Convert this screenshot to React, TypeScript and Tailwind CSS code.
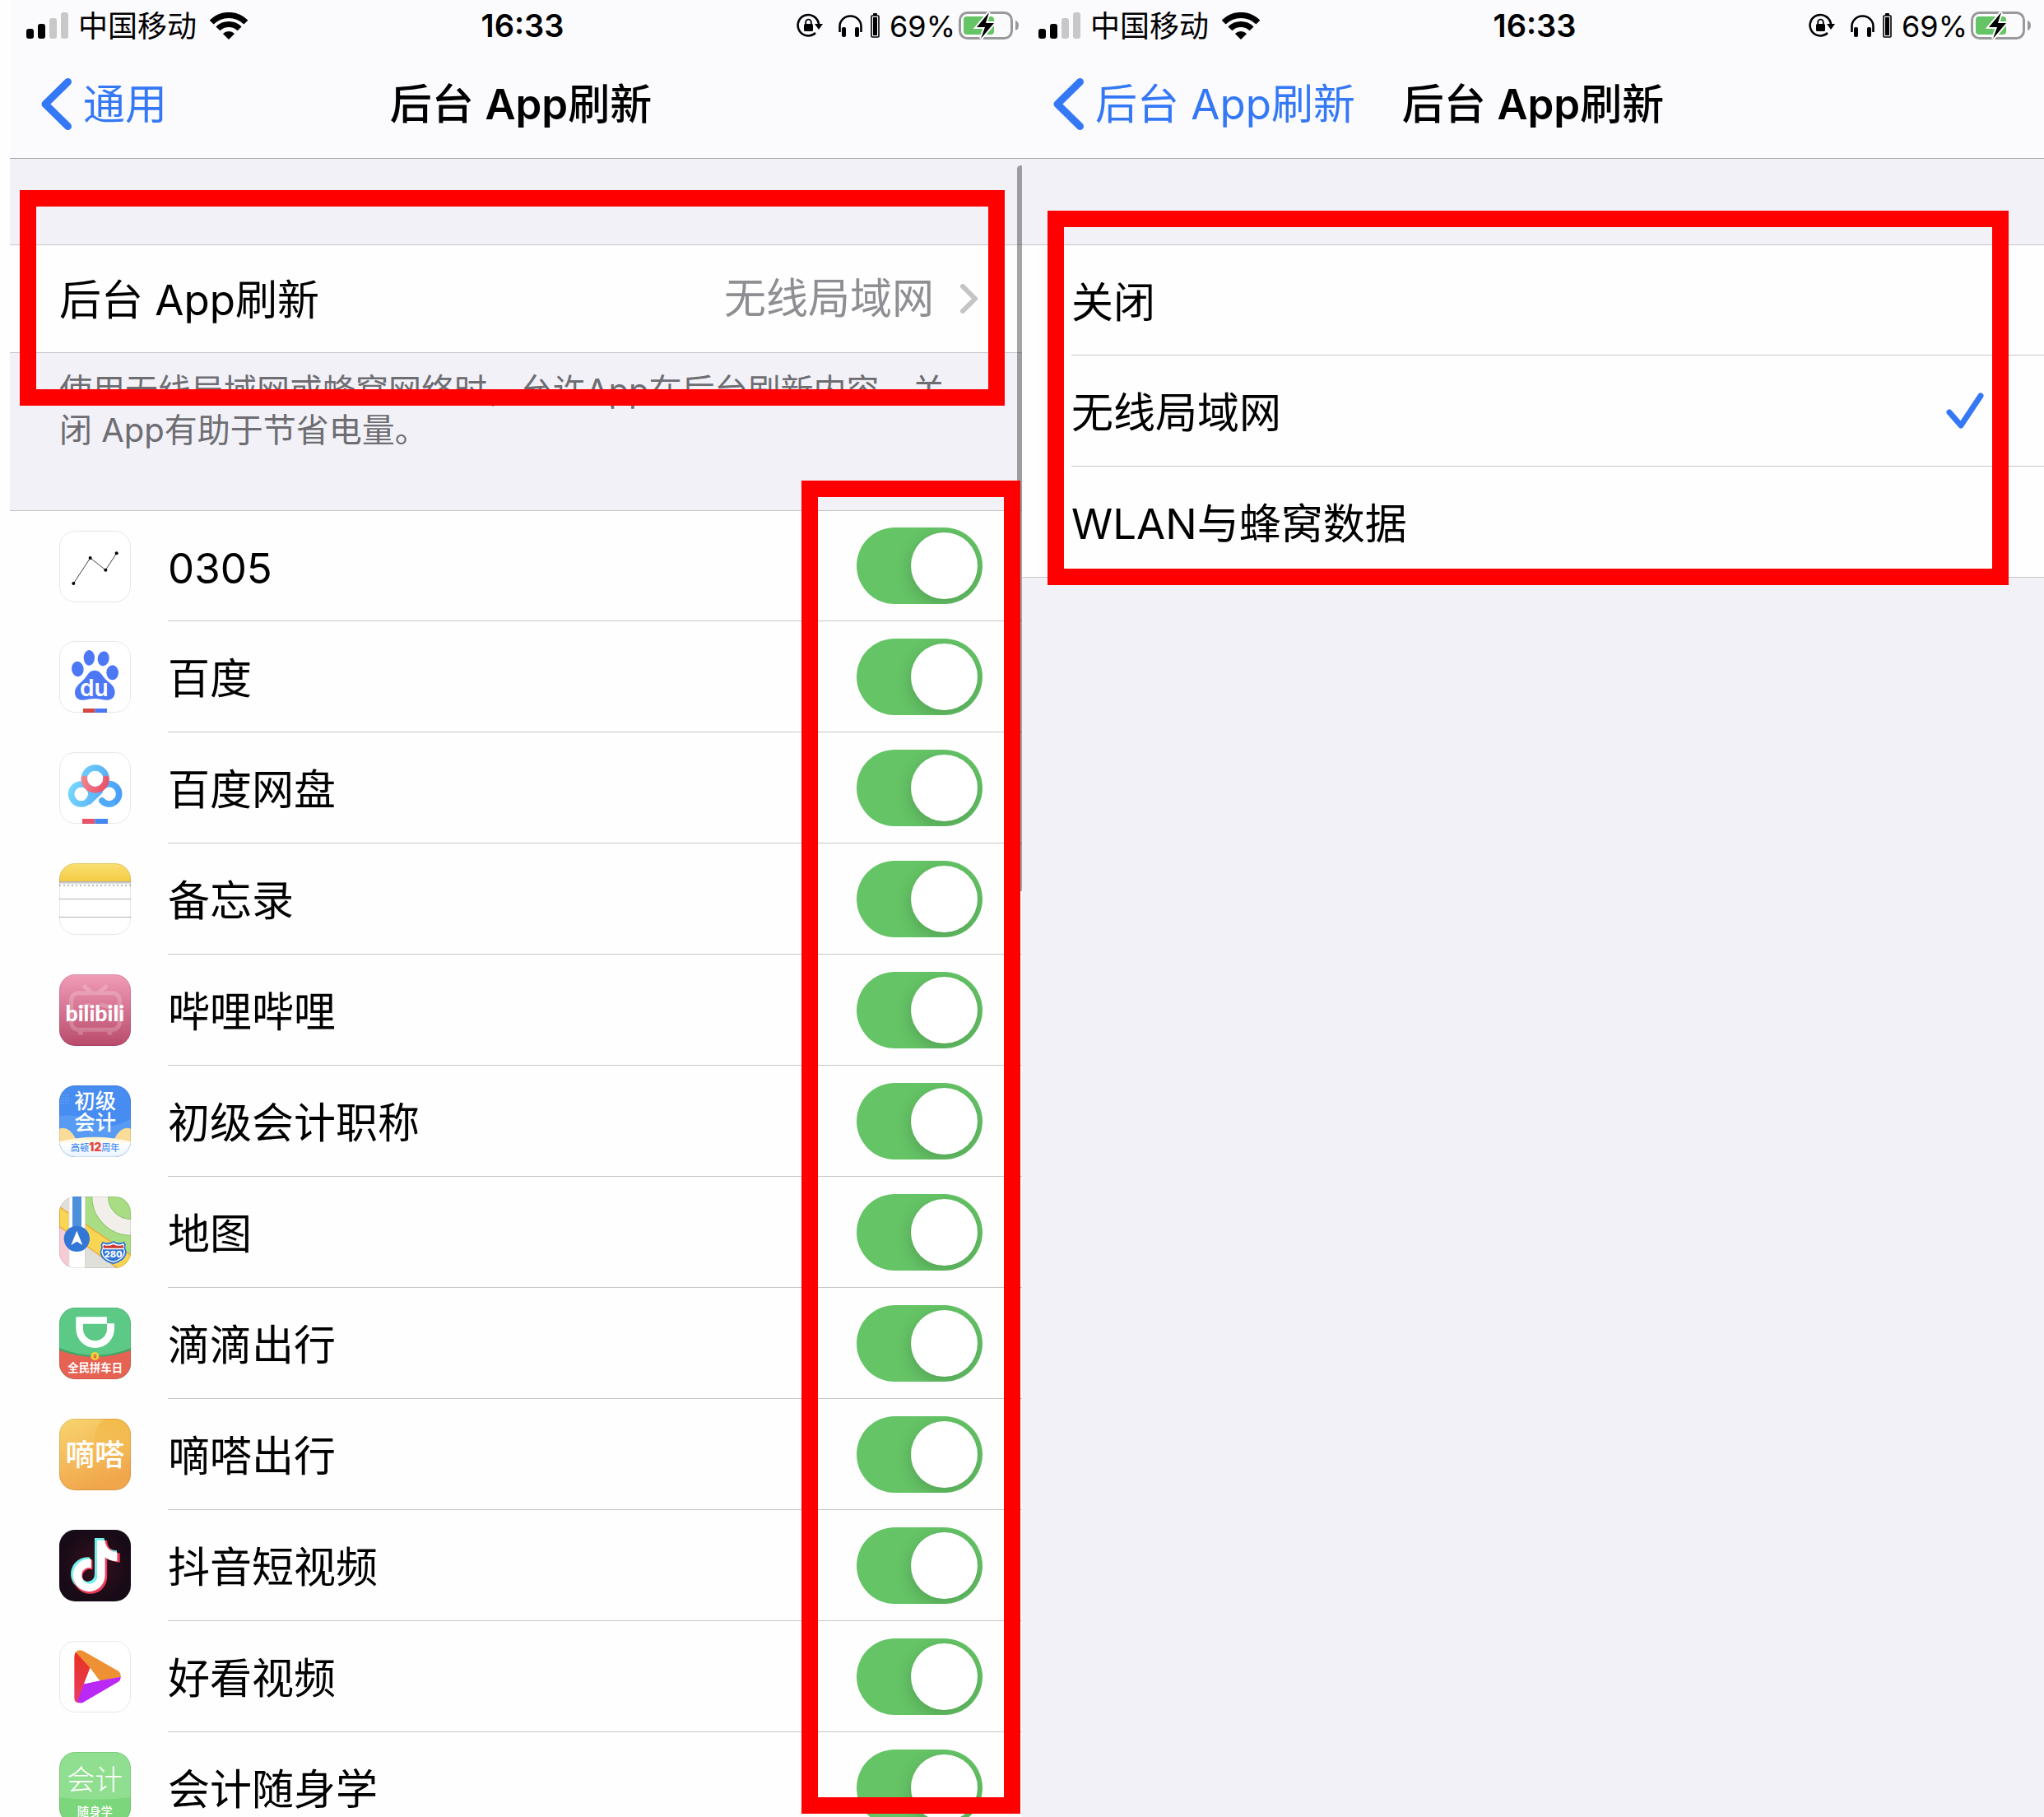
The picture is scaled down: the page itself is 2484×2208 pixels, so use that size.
import { useId, useState } from 'react'
import type { ReactNode } from 'react'

const CJK = '"Noto Sans CJK SC", sans-serif'
const TIKTOK_NOTE =
  'M448,209.91a210.06,210.06,0,0,1-122.77-39.25V349.38A162.55,162.55,0,1,1,185,188.31V278.2a74.62,74.62,0,1,0,52.23,71.18V0l88,0a121.18,121.18,0,0,0,1.86,22.17h0A122.18,122.18,0,0,0,381,102.39a121.43,121.43,0,0,0,67,20.14Z'

/* ---------- app icons, all drawn on a 261 unit square ---------- */

function IconFrame({ children, outline = '#00000018' }: { children: ReactNode; outline?: string }) {
  const id = useId()
  return (
    <svg viewBox="0 0 261 261" className="size-[87px] shrink-0" aria-hidden="true">
      <clipPath id={id}><rect width="261" height="261" rx="58" /></clipPath>
      <g clipPath={`url(#${id})`}>
        <rect width="261" height="261" fill="#fff" />
        {children}
      </g>
      <rect x="1.5" y="1.5" width="258" height="258" rx="56.5" fill="none" stroke={outline} strokeWidth="3" />
    </svg>
  )
}

function ChartIcon() {
  return (
    <IconFrame>
      <path d="M52 192 113 99 169 143 209 82" fill="none" stroke="#444" strokeWidth="3" />
      <circle cx="52" cy="192" r="6" /><circle cx="113" cy="99" r="6" />
      <circle cx="169" cy="143" r="6" /><circle cx="209" cy="82" r="6" />
    </IconFrame>
  )
}

function BaiduIcon() {
  return (
    <IconFrame>
      <g fill="#4c78f6">
        <ellipse cx="67" cy="102" rx="22" ry="28" transform="rotate(-6 67 102)" />
        <ellipse cx="109" cy="61" rx="20" ry="28" />
        <ellipse cx="161" cy="64" rx="21" ry="27" transform="rotate(10 161 64)" />
        <ellipse cx="194" cy="115" rx="22" ry="27" />
        <path d="M129 107C147 107 155 122 165 135C178 151 203 160 203 187C203 205 190 215 176 215C158 215 145 210 130 210C113 210 100 215 82 215C66 215 57 203 57 187C57 162 82 151 95 134C105 120 112 107 129 107Z" />
      </g>
      <text x="127" y="200" textAnchor="middle" fontSize="84" fontWeight="600" fill="#fff" fontFamily="Inter, sans-serif">du</text>
      <rect x="87" y="246" width="43" height="15" fill="#d8473f" />
      <rect x="130" y="246" width="44" height="15" fill="#4c78f6" />
    </IconFrame>
  )
}

function NetdiskIcon() {
  return (
    <IconFrame>
      <defs>
        <linearGradient id="nd-blue" gradientUnits="userSpaceOnUse" x1="33" y1="100" x2="228" y2="150">
          <stop offset="0" stopColor="#78dafc" /><stop offset="1" stopColor="#479cf8" />
        </linearGradient>
        <linearGradient id="nd-red" gradientUnits="userSpaceOnUse" x1="80" y1="90" x2="180" y2="140">
          <stop offset="0" stopColor="#ee8a92" /><stop offset="1" stopColor="#ea4a64" />
        </linearGradient>
      </defs>
      <g fill="none" stroke="url(#nd-blue)" strokeWidth="23" strokeLinecap="round">
        <circle cx="80" cy="153" r="36" />
        <path d="M105 178 155 128A36 36 0 1 1 156 177" />
        <path d="M91 97A40 40 0 0 1 171 97" />
      </g>
      <path d="M102 181 165 121" stroke="url(#nd-blue)" strokeWidth="30" />
      <circle cx="80" cy="153" r="24" fill="#fff" />
      <circle cx="181" cy="153" r="24" fill="#fff" />
      <path d="M91 97A40 40 0 0 0 171 97" fill="none" stroke="url(#nd-red)" strokeWidth="23" strokeLinecap="round" />
      <circle cx="131" cy="97" r="28" fill="#fff" />
      <path d="M156 177A36 36 0 0 0 190 188" fill="none" stroke="#52aafa" strokeWidth="23" strokeLinecap="round" />
      <rect x="84" y="243" width="46" height="18" fill="#ea5468" />
      <rect x="130" y="243" width="47" height="18" fill="#4288f5" />
    </IconFrame>
  )
}

function NotesIcon() {
  return (
    <IconFrame>
      <defs>
        <linearGradient id="nt-top" x1="0" y1="0" x2="0" y2="1">
          <stop offset="0" stopColor="#f9df74" /><stop offset="1" stopColor="#f5cb42" />
        </linearGradient>
        <linearGradient id="nt-shade" x1="0" y1="0" x2="0" y2="1">
          <stop offset="0" stopColor="#a8a8a8" /><stop offset="1" stopColor="#fff" />
        </linearGradient>
      </defs>
      <rect width="261" height="67" fill="url(#nt-top)" />
      <rect y="66" width="261" height="12" fill="url(#nt-shade)" />
      <path d="M0 81H261" stroke="#bdbdbd" strokeWidth="6" strokeDasharray="6 9" />
      <path d="M0 130.500H261M0 196.500H261" stroke="#b4b4b8" strokeWidth="3" />
    </IconFrame>
  )
}

function BilibiliIcon() {
  return (
    <IconFrame>
      <defs>
        <linearGradient id="bl" x1="0" y1="0" x2="0" y2="1">
          <stop offset="0" stopColor="#f09db7" /><stop offset="1" stopColor="#b94b6c" />
        </linearGradient>
      </defs>
      <rect width="261" height="261" fill="url(#bl)" />
      <g opacity="0.2" fill="none" stroke="#fff" strokeWidth="15" strokeLinecap="round">
        <rect x="44" y="68" width="176" height="134" rx="26" />
        <path d="M92 45 112 62M170 45 150 62" />
        <path d="M76 214H80M182 214H186M76 120 108 112M154 112 186 120" />
      </g>
      <text x="130" y="170" textAnchor="middle" fontSize="80" fontWeight="900" fill="#fff" fontFamily="Lato, sans-serif">bilibili</text>
    </IconFrame>
  )
}

function AccountingIcon() {
  return (
    <IconFrame>
      <defs>
        <linearGradient id="ac" x1="0" y1="0" x2="0" y2="1">
          <stop offset="0" stopColor="#fff0c4" /><stop offset="0.35" stopColor="#fff" /><stop offset="1" stopColor="#e8f2fd" />
        </linearGradient>
      </defs>
      <rect width="261" height="261" fill="#468cf1" />
      <path d="M0 110Q120 105 150 135T261 122V261H0Z" fill="#589bf4" />
      <path d="M5 36H38M5 46H38M5 56H38M5 66H38" stroke="#8fbaf7" strokeWidth="3" strokeDasharray="3 6" />
      <path d="M0 158Q34 146 60 194L0 215Z" fill="#f8dc97" />
      <path d="M261 158Q227 146 201 194L261 215Z" fill="#f8dc97" />
      <path d="M0 205Q130 172 261 205V261H0Z" fill="url(#ac)" />
      <g fill="#fff" fontFamily={CJK} fontSize="76" fontWeight="500" textAnchor="middle">
        <text x="131" y="84">初级</text>
        <text x="131" y="163">会计</text>
      </g>
      <text x="131" y="240" textAnchor="middle" fontFamily={CJK} fontSize="33" fontWeight="500" fill="#468cf1">
        高顿<tspan fontFamily="Inter, sans-serif" fontSize="42" fontWeight="900" fill="#e5493f">12</tspan>周年
      </text>
    </IconFrame>
  )
}

function MapsIcon() {
  return (
    <IconFrame>
      <rect width="261" height="261" fill="#e0e0da" />
      <path d="M94 0H261V215L94 105Z" fill="#a9dd84" />
      <circle cx="261" cy="0" r="112" fill="none" stroke="#8cc56c" strokeWidth="62" />
      <circle cx="261" cy="0" r="112" fill="none" stroke="#f2efea" strokeWidth="56" />
      <path d="M0 108V261H36V132Z" fill="#f7cbd6" />
      <path d="M0 37 261 214V296L0 109Z" fill="#f8d654" stroke="#f0a83c" strokeWidth="4" />
      <rect x="35" width="60" height="261" fill="#fff" />
      <path d="M35.500 0V261M94.500 0V261" stroke="#c9c9c4" strokeWidth="2" />
      <rect x="48" width="33" height="130" fill="#4d91dc" />
      <circle cx="64" cy="154" r="47" fill="#3277d6" />
      <path d="M64 125 85 177 64 164 43 177Z" fill="#fff" />
      <path d="M158 164Q177 175 197 162Q217 175 237 164L243 176Q238 186 245 198Q248 233 197 247Q146 233 149 198Q156 186 151 176Z" fill="#3277d6" />
      <path d="M160 171Q178 181 197 168Q216 181 234 171L237 177Q233 187 240 199Q241 228 197 241Q153 228 154 199Q161 187 157 177Z" fill="#fff" />
      <path d="M162 176Q180 184 197 174Q214 184 232 176L234 188H160Z" fill="#c93a32" />
      <path d="M159 193H235Q240 226 197 236Q154 226 159 193Z" fill="#3277d6" />
      <text x="197" y="221" textAnchor="middle" fontSize="33" fontWeight="800" fill="#fff" fontFamily="Inter, sans-serif">280</text>
    </IconFrame>
  )
}

function DidiIcon() {
  return (
    <IconFrame>
      <rect width="261" height="261" fill="#5dc987" />
      <path d="M0 147Q131 200 261 147V200H0Z" fill="#43a56a" />
      <path d="M0 155Q131 205 261 155V261H0Z" fill="#e66252" />
      <path fillRule="evenodd" d="M65 34H174V58H201V77A70 70 0 0 1 61 77V38Q61 34 65 34ZM87 59V77A43.500 43.500 0 0 0 174 77V59Z" fill="#fff" />
      <circle cx="130" cy="177" r="15" fill="#f8cf3e" />
      <text x="130" y="185" textAnchor="middle" fontSize="22" fontWeight="700" fill="#d9503f" fontFamily={CJK}>¥</text>
      <text x="131" y="233" textAnchor="middle" fontSize="40" fontWeight="700" fill="#fff" fontFamily={CJK}>全民拼车日</text>
    </IconFrame>
  )
}

function DidaIcon() {
  return (
    <IconFrame>
      <defs>
        <linearGradient id="dd" x1="0" y1="0" x2="0.4" y2="1">
          <stop offset="0" stopColor="#f7d56e" /><stop offset="1" stopColor="#f1a64c" />
        </linearGradient>
        <linearGradient id="dd-arc" x1="0" y1="0" x2="0" y2="1">
          <stop offset="0" stopColor="#f3ba4a" /><stop offset="1" stopColor="#f3ba4a" stopOpacity="0" />
        </linearGradient>
      </defs>
      <rect width="261" height="261" fill="url(#dd)" />
      <path d="M168 0C138 20 128 45 129 75C132 115 160 150 261 160V0Z" fill="url(#dd-arc)" />
      <text x="130" y="170" textAnchor="middle" fontSize="108" fontWeight="500" fill="#fff" fontFamily={CJK}>嘀嗒</text>
    </IconFrame>
  )
}

function DouyinIcon() {
  return (
    <IconFrame outline="#00000000">
      <defs>
        <radialGradient id="dy">
          <stop offset="0" stopColor="#36101d" /><stop offset="1" stopColor="#170b17" />
        </radialGradient>
      </defs>
      <rect width="261" height="261" fill="url(#dy)" />
      <path d={TIKTOK_NOTE} transform="translate(42 30) scale(0.375)" fill="#72f0ec" />
      <path d={TIKTOK_NOTE} transform="translate(51 39) scale(0.38)" fill="#ee3f5c" />
      <path d={TIKTOK_NOTE} transform="translate(50 38) scale(0.36 0.365)" fill="#fff" />
      <path d="M129 30H162V38H138V160A28 28 0 0 1 84 177Q92 189 106 189Q129 187 129 160Z" fill="#72f0ec" />
    </IconFrame>
  )
}

function HaokanIcon() {
  return (
    <IconFrame>
      <defs>
        <linearGradient id="hk-r" x1="0" y1="0" x2="0" y2="1">
          <stop offset="0" stopColor="#e8301f" /><stop offset="1" stopColor="#e83e62" />
        </linearGradient>
      </defs>
      <path d="M63 38 114 98 90 156 75 225Q55 228 55 208V56Q55 44 63 38Z" fill="url(#hk-r)" />
      <path d="M60 41Q70 30 86 36L216 110Q225 116 224 132L147 146 112 98Z" fill="#ee9135" />
      <path d="M224 131Q224 144 214 150L86 225Q74 230 66 220L90 156 147 145Z" fill="#ba28f6" />
      <path d="M112 98 147 145 91 157Z" fill="#fff" />
    </IconFrame>
  )
}

function StudyIcon() {
  return (
    <IconFrame>
      <rect width="261" height="261" fill="#90de90" />
      <path d="M0 166Q130 180 261 166V261H0Z" fill="#7cd67b" />
      <text x="130" y="137" textAnchor="middle" fontSize="102" fontWeight="200" fill="#fff" fontFamily={CJK}>会计</text>
      <text x="130" y="234" textAnchor="middle" fontSize="43" fontWeight="500" fill="#fff" fontFamily={CJK}>随身学</text>
    </IconFrame>
  )
}

const APPS = [
  { name: '0305', Icon: ChartIcon },
  { name: '百度', Icon: BaiduIcon },
  { name: '百度网盘', Icon: NetdiskIcon },
  { name: '备忘录', Icon: NotesIcon },
  { name: '哔哩哔哩', Icon: BilibiliIcon },
  { name: '初级会计职称', Icon: AccountingIcon },
  { name: '地图', Icon: MapsIcon },
  { name: '滴滴出行', Icon: DidiIcon },
  { name: '嘀嗒出行', Icon: DidaIcon },
  { name: '抖音短视频', Icon: DouyinIcon },
  { name: '好看视频', Icon: HaokanIcon },
  { name: '会计随身学', Icon: StudyIcon },
]

const MODES = ['关闭', '无线局域网', 'WLAN与蜂窝数据']

/* ---------- status bar ---------- */

function StatusBar() {
  return (
    <div className="grid h-[60px] grid-cols-[1fr_auto_1fr] items-center pl-5 pr-4 text-[36px] leading-[60px]">
      <div className="flex items-center">
        <svg viewBox="0 0 51 32" className="h-8 w-[51px]" aria-hidden="true">
          <rect y="20" width="9" height="12" rx="3" />
          <rect x="14" y="14" width="9" height="18" rx="3" />
          <rect x="28" y="7" width="9" height="25" rx="3" fill="#c8c8c9" />
          <rect x="42" width="9" height="32" rx="3" fill="#c8c8c9" />
        </svg>
        <span className="ml-3 pt-0.5">中国移动</span>
        <svg viewBox="0 0 46 33" className="ml-4 h-[33px] w-[46px]" fill="none" stroke="#000" strokeWidth="7" aria-hidden="true">
          <path d="M2.100 12.100A29.500 29.500 0 0 1 43.900 12.100" />
          <path d="M9.900 19.900A18.500 18.500 0 0 1 36.100 19.900" />
          <path d="M23 33 15.900 25.900A10 10 0 0 1 30.100 25.900Z" fill="#000" stroke="none" />
        </svg>
      </div>
      <span className="text-[38px] font-semibold">16:33</span>
      <div className="flex items-center justify-end">
        <svg viewBox="0 0 32 30" className="h-[30px] w-8" aria-hidden="true">
          <path d="M23 24A12.700 12.700 0 1 1 27 14" fill="none" stroke="#000" strokeWidth="2.600" />
          <path d="M22 13H32L27 20Z" />
          <rect x="9" y="13" width="11" height="9" rx="1.500" />
          <path d="M11.200 14V11A3.300 3.300 0 0 1 17.800 11V14" fill="none" stroke="#000" strokeWidth="1.800" />
        </svg>
        <svg viewBox="0 0 29 27" className="ml-[19px] h-[27px] w-[29px]" aria-hidden="true">
          <path d="M1.500 21V14A13 12.500 0 0 1 27.500 14V21" fill="none" stroke="#000" strokeWidth="2.600" />
          <rect x="4" y="15" width="5" height="12" rx="2" />
          <rect x="20" y="15" width="5" height="12" rx="2" />
        </svg>
        <svg viewBox="0 0 11 30" className="ml-2.5 h-[30px] w-[11px]" aria-hidden="true">
          <rect x="3" width="5" height="3" rx="1" />
          <rect x="1" y="3" width="9" height="26" rx="1" fill="none" stroke="#000" strokeWidth="1.600" />
          <rect x="3" y="5" width="5" height="22" />
        </svg>
        <span className="ml-3 pt-0.5">69%</span>
        <svg viewBox="0 0 73 34" className="ml-1 h-[34px] w-[73px]" aria-hidden="true">
          <rect x="1.500" y="1.500" width="63" height="31" rx="9" fill="none" stroke="#99999b" strokeWidth="3" />
          <rect x="6" y="6" width="37" height="22" rx="4" fill="#65c466" />
          <path d="M69 11Q73 12 73 17T69 23Z" fill="#99999b" />
          <path d="M37 1 22 19H32L27 33 43 14H33Z" stroke="#fff" strokeWidth="4" />
          <path d="M37 1 22 19H32L27 33 43 14H33Z" />
        </svg>
      </div>
    </div>
  )
}

function Header({ back }: { back: string }) {
  return (
    <header className="border-b border-[#a8a8ac] bg-[#fbfbfd]">
      <StatusBar />
      <div className="grid h-[132px] grid-cols-[1fr_auto_1fr] items-center px-[38px]">
        <button type="button" className="flex items-center gap-[14px] justify-self-start whitespace-nowrap text-[#3478f6]">
          <svg viewBox="0 0 37 63" className="h-[63px] w-[37px]" fill="none" stroke="currentColor" strokeWidth="9" strokeLinecap="round" strokeLinejoin="round" aria-hidden="true">
            <path d="M32.500 4.500 5 31.500 32.500 58.500" />
          </svg>
          <span className="pt-0.5">{back}</span>
        </button>
        <h1 className="whitespace-nowrap pt-0.5 font-medium">后台 <span className="font-semibold">App</span>刷新</h1>
      </div>
    </header>
  )
}

function Switch({ id, checked, onChange }: { id: string; checked: boolean; onChange: (v: boolean) => void }) {
  return (
    <input
      id={id}
      type="checkbox"
      role="switch"
      checked={checked}
      onChange={e => onChange(e.target.checked)}
      className="h-[93px] w-[153px] shrink-0 cursor-pointer appearance-none overflow-hidden rounded-full bg-[#e9e9eb] p-1.5 transition-colors before:block before:size-[81px] before:rounded-full before:bg-white before:shadow-[0_6px_20px_rgba(0,0,0,0.18)] before:transition-transform checked:bg-[#65c466] checked:before:translate-x-[60px]"
    />
  )
}

function AppList() {
  const [enabled, setEnabled] = useState<Record<string, boolean>>({})

  return (
    <ul className="bg-[#fefefe]">
      {APPS.map(({ name, Icon }, i) => (
        <li key={name} className={`flex h-[135px] items-stretch pl-[60px] ${i === 0 ? 'border-t border-[#c6c6c8]' : ''}`}>
          <div className="flex w-[132px] shrink-0 items-center">
            <Icon />
          </div>
          <div className="flex flex-1 items-center justify-between border-b border-[#c6c6c8] pr-[60px]">
            <label htmlFor={`app-${i}`} className="pt-1.5">{name}</label>
            <Switch
              id={`app-${i}`}
              checked={enabled[name] ?? true}
              onChange={v => setEnabled(p => ({ ...p, [name]: v }))}
            />
          </div>
        </li>
      ))}
    </ul>
  )
}

function RefreshScreen() {
  return (
    <section className="h-full overflow-hidden bg-[#fefefe] pl-3">
      <div className="relative -mr-3 h-full bg-[#f2f1f7]">
        <Header back="通用" />
        <button type="button" className="mt-[104px] flex h-[132px] w-full items-center border-y border-[#c6c6c8] bg-[#fefefe] pl-[60px] pr-[66px] text-left">
          <span className="flex-1 pt-1">后台 App刷新</span>
          <span className="text-[#8e8e93]">无线局域网</span>
          <svg viewBox="0 0 21 36" className="ml-8 h-9 w-[21px]" fill="none" stroke="#c4c4c7" strokeWidth="6" strokeLinecap="round" strokeLinejoin="round" aria-hidden="true">
            <path d="M3 3 18 18 3 33" />
          </svg>
        </button>
        <p className="h-[191px] pl-[60px] pr-24 pt-[22px] text-[40px] leading-[48px] text-[#6d6d72]">
          使用无线局域网或蜂窝网络时，允许App在后台刷新内容。关闭 App有助于节省电量。
        </p>
        <AppList />

        {/* scroll indicator */}
        <div className="absolute right-[9px] top-[201px] h-[882px] w-[9px] rounded-full bg-black/35" />
        {/* highlights */}
        <div className="pointer-events-none absolute left-3 right-[33px] top-[231px] h-[262px] border-[20px] border-[#ff0000]" />
        <div className="pointer-events-none absolute bottom-1 right-[14px] top-[584px] w-[266px] border-[20px] border-[#ff0000]" />
      </div>
    </section>
  )
}

function ModeScreen() {
  const [mode, setMode] = useState(MODES[1])

  return (
    <section className="relative h-full overflow-hidden bg-[#f2f1f7]">
      <Header back="后台 App刷新" />
      <div role="radiogroup" className="mt-[104px] border-b border-[#c6c6c8] bg-[#fefefe]">
        {MODES.map((m, i) => (
          <label key={m} className={`flex cursor-pointer pl-[60px] ${i === 0 ? 'h-[135px] border-t border-[#c6c6c8]' : i === 1 ? 'h-[135px]' : 'h-[134px]'}`}>
            <span className={`flex flex-1 items-center justify-between pr-[73px] ${i < MODES.length - 1 ? 'border-b border-[#c6c6c8]' : ''}`}>
              <span className="pt-1.5">{m}</span>
              <input type="radio" name="mode" checked={mode === m} onChange={() => setMode(m)} className="sr-only" />
              {mode === m && (
                <svg viewBox="0 0 46 44" className="h-11 w-[46px]" fill="none" stroke="#3478f6" strokeWidth="7" strokeLinecap="round" strokeLinejoin="round" aria-hidden="true">
                  <path d="M4 24 18 40 42 4" />
                </svg>
              )}
            </span>
          </label>
        ))}
      </div>
      <div className="pointer-events-none absolute left-[31px] right-[43px] top-[256px] h-[455px] border-[20px] border-[#ff0000]" />
    </section>
  )
}

export default function App() {
  return (
    <main className="grid h-screen grid-cols-2 overflow-hidden font-[Inter,'Noto_Sans_CJK_SC',sans-serif] text-[51px] leading-[60px] text-black">
      <RefreshScreen />
      <ModeScreen />
    </main>
  )
}
